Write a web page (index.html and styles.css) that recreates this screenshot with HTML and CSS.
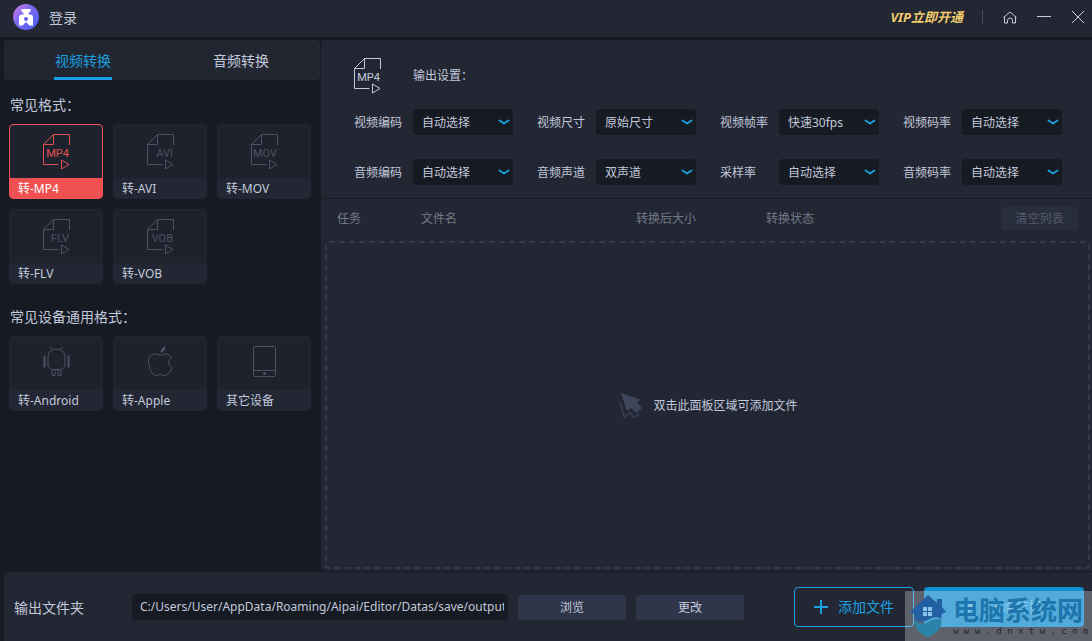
FILE: index.html
```html
<!DOCTYPE html>
<html lang="zh-CN">
<head>
<meta charset="utf-8">
<title>视频转换</title>
<link rel="stylesheet" href="styles.css">
</head>
<body>
<svg class="defs" aria-hidden="true">
  <symbol id="doc" viewBox="0 0 28 36">
    <path d="M26.5 11V.5H10.5L.5 10.5V30.5H15.5M.5 10.5H10.5V.5M18.5 26L26 30.5L18.5 35Z" fill="none" stroke="currentColor"/>
  </symbol>
  <symbol id="chev" viewBox="0 0 12 8">
    <path d="M1.5 2.500L6 5.500L10.500 2.500" fill="none" stroke="#1a9fd9" stroke-width="2" stroke-linecap="round" stroke-linejoin="round"/>
  </symbol>
</svg>
<header class="titlebar">
  <svg class="avatar" viewBox="0 0 26 26">
    <defs><linearGradient id="ag" x1="0" y1="0" x2="1" y2="1"><stop offset="0" stop-color="#d97be2"/><stop offset=".4" stop-color="#7d6bf0"/><stop offset="1" stop-color="#4a5cf0"/></linearGradient></defs>
    <circle cx="13" cy="13" r="13" fill="url(#ag)"/>
    <path d="M8.500 5H17.500V7.500L15.500 9V10.500H17Q20 10.500 20 13.500V21.500H16.500L13 18L9.500 21.500H6V13.500Q6 10.500 9 10.500H10.500V9L8.500 7.500Z" fill="#fff"/>
    <circle cx="13" cy="15" r="2" fill="#5b62ee"/>
  </svg>
  <a class="login" href="#">登录</a>
  <a class="vip" href="#">VIP立即开通</a>
  <span class="rule"></span>
  <button class="win" aria-label="主页"><svg width="14" height="14" viewBox="0 0 14 14"><path d="M.5 7.500L7 2L13.500 7.500M1.500 7V13H4.500V10.500Q4.500 8 7 8Q9.500 8 9.500 10.500V13H12.500V7" fill="none" stroke="#c8ccdc"/></svg></button>
  <button class="win" aria-label="最小化"><svg width="14" height="14" viewBox="0 0 14 14"><path d="M0 6.500H14" stroke="#c8ccdc"/></svg></button>
  <button class="win" aria-label="关闭"><svg width="14" height="14" viewBox="0 0 14 14"><path d="M1 1L13 13M13 1L1 13" stroke="#c8ccdc"/></svg></button>
</header>
<main class="main">
  <aside class="side">
    <nav class="tabs">
      <button class="tab active">视频转换</button>
      <button class="tab">音频转换</button>
    </nav>
    <h2 class="heading">常见格式：</h2>
    <div class="tiles">
      <button class="tile selected"><svg class="art" viewBox="0 0 28 36"><use href="#doc"/><text x="26" y="23">MP4</text></svg><span class="cap">转-MP4</span></button>
      <button class="tile"><svg class="art" viewBox="0 0 28 36"><use href="#doc"/><text x="26" y="23">AVI</text></svg><span class="cap">转-AVI</span></button>
      <button class="tile"><svg class="art" viewBox="0 0 28 36"><use href="#doc"/><text x="26" y="23">MOV</text></svg><span class="cap">转-MOV</span></button>
      <button class="tile"><svg class="art" viewBox="0 0 28 36"><use href="#doc"/><text x="26" y="23">FLV</text></svg><span class="cap">转-FLV</span></button>
      <button class="tile"><svg class="art" viewBox="0 0 28 36"><use href="#doc"/><text x="26" y="23">VOB</text></svg><span class="cap">转-VOB</span></button>
    </div>
    <h2 class="heading">常见设备通用格式：</h2>
    <div class="tiles">
      <button class="tile"><svg class="art" viewBox="0 0 28 36"><path d="M7 .8L9.500 3.500M20 .8L17.500 3.500M8.500 23.500L5 20.500V11Q5 3.500 13.500 3Q22 3.500 22 11V20.500L18.500 23.500ZM9 23.500V29.500H12V23.500M15 23.500V29.500H18V23.500" fill="none" stroke="currentColor"/><path d="M1.500 9.500V21.500M25.500 9.500V21.500" stroke="currentColor" stroke-width="2"/></svg><span class="cap">转-Android</span></button>
      <button class="tile"><svg class="art" viewBox="0 0 28 36"><path d="M13.500 7Q13.500 2 18.500 0Q19 5 13.500 7Z" fill="currentColor"/><path d="M13.500 9.200C11.500 9 9.500 7.500 7 8C3 8.600 1 12 1.500 16.500C2 21.500 5 28.500 8.500 29.500C10.500 29.800 11.500 28.500 13.500 28.500C15.500 28.500 16.500 29.800 18.500 29.500C21.500 28.800 24 24.500 25 21.500C20.500 19.500 20.500 13.500 24.500 11.500C23 9 20.500 7.800 18.500 8C16.500 8.200 15.500 9.200 13.500 9.200Z" fill="none" stroke="currentColor"/></svg><span class="cap">转-Apple</span></button>
      <button class="tile"><svg class="art" viewBox="0 0 28 36"><rect x="2.500" y=".5" width="22" height="30" rx="1" fill="none" stroke="currentColor"/><path d="M2.500 24.500H24.500" stroke="currentColor"/><circle cx="13.500" cy="27.500" r="1.500" fill="currentColor"/></svg><span class="cap">其它设备</span></button>
    </div>
  </aside>
  <section class="work">
    <div class="settings">
      <div class="target"><svg class="art" viewBox="0 0 28 36"><use href="#doc"/><text x="26" y="23">MP4</text></svg><h2>输出设置：</h2></div>
      <div class="fields">
        <div class="field"><label for="f1">视频编码</label><span class="pick"><select id="f1"><option>自动选择</option></select><svg><use href="#chev"/></svg></span></div>
        <div class="field"><label for="f2">视频尺寸</label><span class="pick"><select id="f2"><option>原始尺寸</option></select><svg><use href="#chev"/></svg></span></div>
        <div class="field"><label for="f3">视频帧率</label><span class="pick"><select id="f3"><option>快速30fps</option></select><svg><use href="#chev"/></svg></span></div>
        <div class="field"><label for="f4">视频码率</label><span class="pick"><select id="f4"><option>自动选择</option></select><svg><use href="#chev"/></svg></span></div>
        <div class="field"><label for="f5">音频编码</label><span class="pick"><select id="f5"><option>自动选择</option></select><svg><use href="#chev"/></svg></span></div>
        <div class="field"><label for="f6">音频声道</label><span class="pick"><select id="f6"><option>双声道</option></select><svg><use href="#chev"/></svg></span></div>
        <div class="field"><label for="f7">采样率</label><span class="pick"><select id="f7"><option>自动选择</option></select><svg><use href="#chev"/></svg></span></div>
        <div class="field"><label for="f8">音频码率</label><span class="pick"><select id="f8"><option>自动选择</option></select><svg><use href="#chev"/></svg></span></div>
      </div>
    </div>
    <div class="listhead">
      <table class="cols"><thead><tr><th class="c-task">任务</th><th class="c-name">文件名</th><th class="c-size">转换后大小</th><th>转换状态</th></tr></thead></table>
      <button class="clear" disabled>清空列表</button>
    </div>
    <div class="drop">
      <svg width="24" height="28" viewBox="0 0 24 28"><path d="M2 1L21 7.500L18 11L23 16L17 21L12 16L8 19Z" fill="#3f465b"/><path d="M1 10L5.500 25L11 20.500L15 25.500L20 22" fill="none" stroke="#363c4e" stroke-width="2"/></svg>
      <span>双击此面板区域可添加文件</span>
    </div>
  </section>
</main>
<footer class="bottom">
  <label class="outlabel" for="path">输出文件夹</label>
  <input id="path" class="path" type="text" value="C:/Users/User/AppData/Roaming/Aipai/Editor/Datas/save/output">
  <button class="flat">浏览</button>
  <button class="flat">更改</button>
  <div class="actions">
    <button class="add"><svg width="14" height="14" viewBox="0 0 14 14"><path d="M7 0V14M0 7H14" stroke="#1ba1e2" stroke-width="2"/></svg>添加文件</button>
    <button class="start"><svg width="11" height="14" viewBox="0 0 11 14"><path d="M0 0L11 7L0 14Z" fill="currentColor"/></svg>开始转换</button>
  </div>
  <div class="mark">
    <svg width="36" height="42" viewBox="0 0 36 42">
      <path d="M4.500 25Q4.500 37 18 42Q31.500 37 31.500 25Q25 22 18 27Q11 31 4.500 25Z" fill="#2b83a8"/>
      <path d="M18 0L27 8V4H32V12L36 17L31.500 19V24Q25 20 18 25Q11 29 4.500 24V19L0 17Z" fill="#235fa3"/>
      <path d="M13 12H17V16H13ZM18 12H22V16H18ZM13 17H17V21H13ZM18 17H22V21H18Z" fill="#8cc4e8"/>
    </svg>
    <div class="marktext"><strong>电脑系统网</strong><span>w w w . d n x t w . c o m</span></div>
  </div>
</footer>
</body>
</html>
```
FILE: styles.css
```css
* { box-sizing: border-box; }
body {
  margin: 0;
  min-height: 100vh;
  display: flex;
  flex-direction: column;
  background: #161a22;
  color: #c3c9dc;
  font: 12px/18px "Noto Sans", "Noto Sans CJK SC", sans-serif;
}
button, input, select { font: inherit; color: inherit; border: 0; padding: 0; margin: 0; }
h2 { margin: 0; font-weight: 400; }
a { color: inherit; text-decoration: none; }
.defs { position: absolute; width: 0; height: 0; }

.titlebar {
  display: flex;
  align-items: center;
  height: 37px;
  padding: 0 7px 3px 13px;
  background: #222733;
}
.avatar { width: 26px; height: 26px; }
.login { margin-left: 10px; padding-top: 2px; font-size: 14px; }
.vip { margin-left: auto; color: #f0cc6c; font-size: 13px; font-weight: 700; font-style: italic; }
.rule { width: 1px; height: 14px; margin: 0 20px 0 19px; background: #484e5e; }
.win { display: flex; justify-content: center; background: none; }
.win + .win { margin-left: 20px; }

.main { flex: 1; display: flex; padding: 3px 0 1px 4px; }
.side { flex: none; width: 316px; }
.tabs { display: flex; height: 40px; background: #212631; border-radius: 4px; }
.tab {
  flex: 1;
  display: flex;
  justify-content: center;
  background: none;
  font-size: 14px;
  line-height: 42px;
  position: relative;
}
.active { color: #1b9fdf; }
.active::after {
  content: "";
  position: absolute;
  bottom: 0;
  width: 58px;
  height: 3px;
  background: #1b9fe6;
}
.heading { margin: 15px 6px 9px; font-size: 14px; line-height: 20px; }
.tiles { display: grid; grid-template-columns: repeat(3, 94px); gap: 10px; margin: 0 5px; }
.tiles + .heading { margin-top: 23px; }
.tile {
  display: flex;
  flex-direction: column;
  align-items: center;
  height: 75px;
  overflow: hidden;
  border: 1px solid #212632;
  border-radius: 4px;
  background: #1e222d;
}
.art { width: 28px; height: 36px; color: #4d5263; fill: currentColor; }
.art text { font: 11px Roboto, sans-serif; text-anchor: end; }
.tile .art { margin: 9px 0 0 2px; }
.tile .cap {
  align-self: stretch;
  margin-top: auto;
  padding: 1px 0 0 8px;
  background: #222733;
  color: #c3c9dc;
  line-height: 19px;
  text-align: left;
}
.tile.selected { border-color: #f25555; }
.selected .art { color: #e04f52; }
.selected .cap { background: #f25151; color: #fff; }

.work {
  flex: 1;
  display: flex;
  flex-direction: column;
  margin-left: 1px;
  background: #222733;
  border-radius: 4px 0 0 4px;
}
.settings { padding: 18px 30px 13px 33px; border-bottom: 1px solid #171b24; }
.target { display: flex; align-items: center; gap: 31px; }
.target .art { color: #c3c9dc; }
.target h2 { font-size: 12px; }
.fields {
  display: grid;
  grid-template-columns: repeat(4, auto);
  justify-content: space-between;
  gap: 24px 0;
  margin-top: 15px;
}
.field { display: flex; align-items: center; }
.field label { width: 59px; padding-top: 2px; }
.pick { position: relative; }
.pick select {
  display: block;
  width: 100px;
  height: 26px;
  padding: 2px 24px 0 9px;
  border-radius: 4px;
  background: #161a22;
  appearance: none;
}
.pick svg { position: absolute; right: 3px; top: 9px; width: 12px; height: 8px; pointer-events: none; }

.listhead { display: flex; align-items: center; padding: 8px 14px 0 16px; color: #747a89; }
.cols { flex: 1; border-collapse: collapse; table-layout: fixed; width: 100%; }
.cols th { padding: 0; font-weight: 400; text-align: left; }
.c-task { width: 84px; }
.c-name { width: 215px; }
.c-size { width: 130px; }
.clear { width: 77px; height: 23px; border-radius: 3px; background: #292e3d; color: #53596a; }
.drop {
  flex: 1;
  display: flex;
  align-items: center;
  justify-content: center;
  gap: 10px;
  margin: 11px 2px 2px 4px;
  padding: 2px 0 0 2px;
  border: 2px dashed #353a48;
  border-radius: 4px;
}

.bottom {
  position: relative;
  display: flex;
  align-items: center;
  height: 69px;
  margin-left: 4px;
  padding: 0 8px 0 10px;
  background: #222733;
  border-radius: 4px 0 0 0;
}
.outlabel { width: 118px; padding-top: 2px; font-size: 14px; }
.path { width: 376px; height: 26px; padding: 0 4px 0 8px; border-radius: 4px; background: #161a22; }
.flat { width: 108px; height: 25px; margin: 2px 0 0 10px; border-radius: 3px; background: #303649; }
.actions { display: flex; gap: 10px; margin-left: auto; font-size: 14px; }
.actions button { display: flex; align-items: center; justify-content: center; gap: 10px; height: 40px; border-radius: 4px; }
.add { width: 120px; background: none; color: #1ba1e2; }
.actions .add { border: 1px solid #1b9fe6; }
.start { width: 160px; background: #1190cf; color: #60b8e4; }
.mark {
  position: absolute;
  right: 0;
  bottom: 0;
  display: flex;
  gap: 7px;
  width: 187px;
  height: 50px;
  padding: 4px 0 0 5px;
  background: rgba(235, 235, 245, 0.3);
}
.mark svg { flex: none; }
.marktext { display: flex; flex-direction: column; color: #1c75ac; white-space: nowrap; }
.marktext strong { font-size: 26px; line-height: 30px; }
.marktext span { color: #23262e; font: 9px/12px "DejaVu Sans Mono", monospace; }
```
